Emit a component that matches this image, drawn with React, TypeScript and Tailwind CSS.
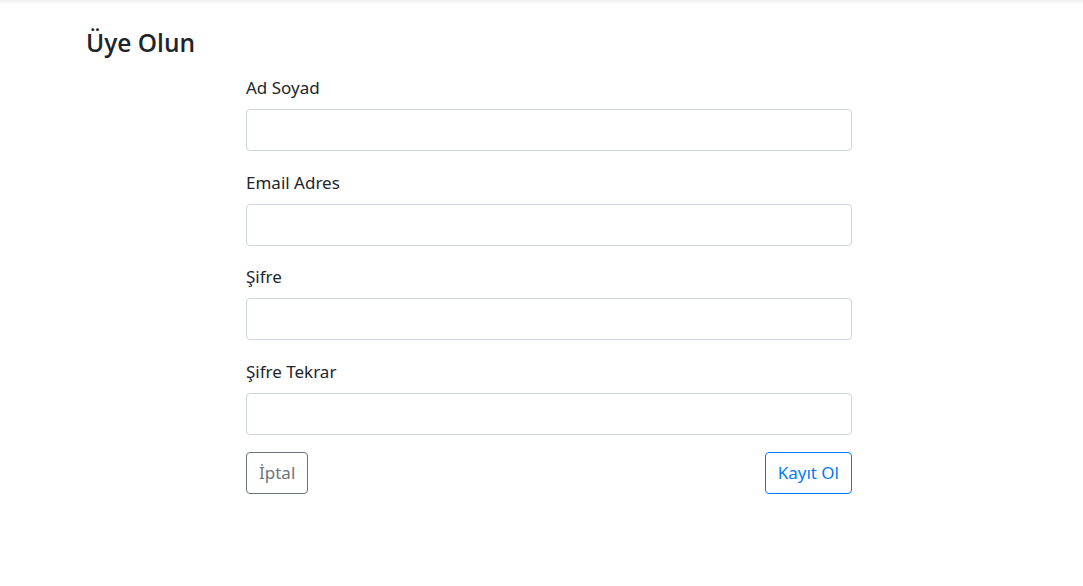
import React from "react";

const font = { fontFamily: '"Noto Sans", "Open Sans", sans-serif' };

function Field({ label }: { label: string }) {
  return (
    <div className="mb-[20.67px]">
      <label className="block text-[17px] leading-[22px] mb-[10px] text-[#212529]">{label}</label>
      <input type="text" className="block w-full h-[42px] rounded-[4px] border border-[#ced4da] bg-white outline-none" />
    </div>
  );
}

export default function App() {
  return (
    <div className="w-[1083px] h-[586px] bg-white overflow-hidden" style={font}>
      <div className="h-[4px] bg-gradient-to-b from-[#f0f0f0] to-white" />
      <div className="pl-[86px] pt-[24px]">
        <h4 className="text-[24.5px] leading-[29px] font-semibold text-[#212529]" style={{ fontFamily: '"Open Sans", "Noto Sans", sans-serif' }}>Üye Olun</h4>
      </div>
      <div className="ml-[246px] w-[606px] mt-[20px]">
        <Field label="Ad Soyad" />
        <Field label="Email Adres" />
        <Field label="Şifre" />
        <Field label="Şifre Tekrar" />
        <div className="flex justify-between -mt-[4px]">
          <button className="h-[42px] px-[12px] rounded-[4px] border border-[#6c757d] text-[#6c757d] text-[17px]">İptal</button>
          <button className="h-[42px] px-[12px] rounded-[4px] border border-[#007bff] text-[#007bff] text-[17px]">Kayıt Ol</button>
        </div>
      </div>
    </div>
  );
}
